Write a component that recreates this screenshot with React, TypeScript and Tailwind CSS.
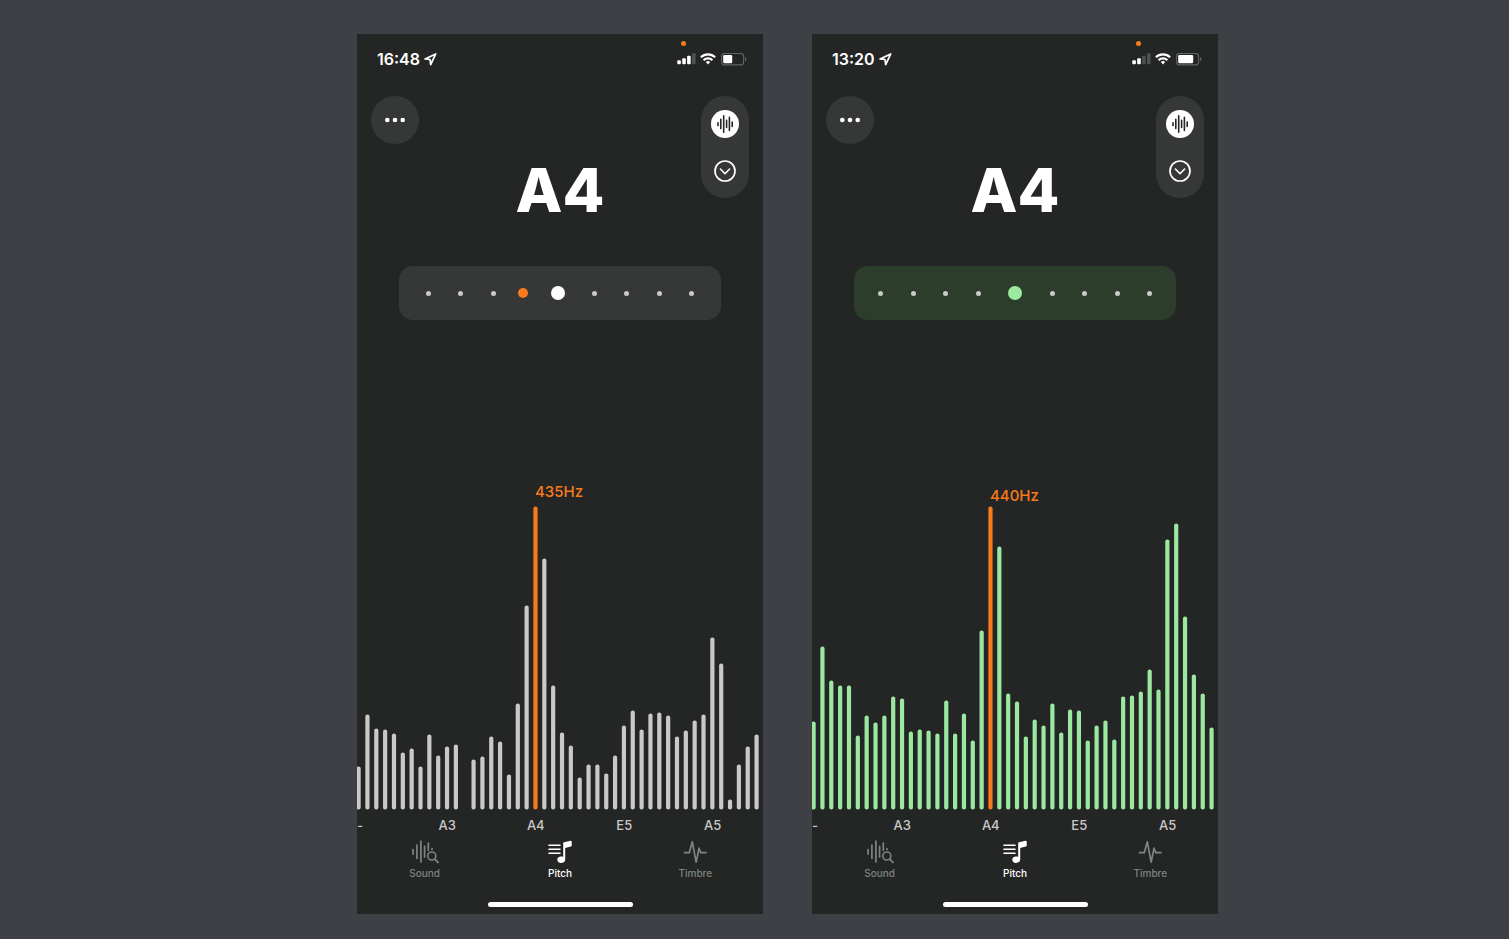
import clsx from "clsx";
import type { ReactNode } from "react";

type Screen = {
  time: string;
  signal: number;
  battery: number;
  note: string;
  frequency: string;
  inTune: boolean;
  levels: number[];
};

const PEAK_INDEX = 20;
const CHART_HEIGHT = 304;

const SCREENS: Screen[] = [
  {
    time: "16:48",
    signal: 3,
    battery: 9,
    note: "A4",
    frequency: "435Hz",
    inTune: false,
    levels: [
      43, 95, 81, 80, 76, 57, 61, 43, 75, 54, 63, 65, 0, 50, 53, 73, 68, 35, 106, 204, 303, 251, 124,
      77, 64, 32, 45, 45, 36, 54, 84, 99, 80, 96, 97, 94, 73, 79, 89, 95, 172, 146, 10, 45, 63, 75,
    ],
  },
  {
    time: "13:20",
    signal: 2,
    battery: 15,
    note: "A4",
    frequency: "440Hz",
    inTune: true,
    levels: [
      88, 163, 129, 124, 124, 74, 94, 87, 94, 113, 111, 78, 80, 79, 76, 109, 76, 96, 69, 179, 303, 263,
      116, 108, 73, 90, 84, 106, 77, 100, 99, 69, 84, 89, 70, 113, 114, 118, 140, 120, 270, 286, 193,
      135, 116, 82,
    ],
  },
];

const AXIS_LABELS = ["A3", "A4", "E5", "A5"];

function StatusBar({ time, signal, battery }: { time: string; signal: number; battery: number }) {
  return (
    <div className="flex h-[50px] items-center justify-between pr-4 pl-5 text-white">
      <div className="flex items-center gap-1">
        <span className="text-base leading-5 font-semibold">{time}</span>
        <svg viewBox="0 0 13 13" className="size-[13px]" fill="none" stroke="currentColor">
          <path d="M11.7.9 1 5.9l5 .6.7 5.1Z" strokeWidth="1.7" strokeLinejoin="round" />
        </svg>
      </div>
      <div className="relative flex items-center gap-1">
        <span className="absolute -top-3 left-1 size-[5px] rounded-full bg-[#f97a1c]" />
        <svg viewBox="0 0 19 12" className="h-3 w-[19px]">
          {[4, 6, 8.5, 11].map((height, i) => (
            <rect
              key={height}
              x={0.3 + i * 4.9}
              y={11.2 - height}
              width="3.6"
              height={height}
              rx="1"
              fill={i < signal ? "#fff" : "#4c524f"}
            />
          ))}
        </svg>
        <svg viewBox="0 0 16 12" className="h-3 w-4" fill="none" stroke="currentColor" strokeWidth="2.2">
          <path d="M.9 4.3a10.2 10.2 0 0 1 14.2 0" />
          <path d="M3.6 7.2a6.3 6.3 0 0 1 8.8 0" />
          <path d="M8 11.4 5.8 9.1a3.2 3.2 0 0 1 4.4 0Z" fill="currentColor" stroke="none" />
        </svg>
        <svg viewBox="0 0 26 13" className="ml-px h-[13px] w-[26px]">
          <rect x=".6" y=".5" width="22" height="11.4" rx="3" fill="none" stroke="#5d6661" strokeWidth="1.1" />
          <rect x="2.2" y="2.1" width={battery} height="8.2" rx="1.2" fill="#fff" />
          <path d="M24 4.3c1 .3 1.4 1 1.4 1.900s-.4 1.600-1.400 1.900Z" fill="#5d6661" />
        </svg>
      </div>
    </div>
  );
}

function WaveformIcon() {
  return (
    <svg viewBox="0 0 28 28" className="size-7" fill="none" stroke="#242625" strokeLinecap="round">
      <path
        d="M7 12.7v2.9M9.8 9.4v9.2M12.7 5.7v16.6M15.6 10.4v7M18.4 7.4v13M21.2 12v4.4"
        strokeWidth="1.6"
      />
    </svg>
  );
}

function SoundIcon() {
  return (
    <svg viewBox="0 0 30 24" className="h-6 w-[30px]" fill="none" stroke="currentColor" strokeLinecap="round">
      <path
        d="M3 9.5v4.6M6.9 5v13.3M10.9 1v21M14.6 6.3v10.6M18.3 3v7.3M22 8.6v.8"
        strokeWidth="1.7"
      />
      <circle cx="21.8" cy="16" r="4" strokeWidth="1.6" />
      <path d="m24.9 19.2 3 3.2" strokeWidth="1.9" />
    </svg>
  );
}

function PitchIcon() {
  return (
    <svg viewBox="0 0 28 24" className="h-6 w-7" fill="currentColor">
      <path
        d="M3 5.3h11M3 9.3h11M3 13.3h11"
        stroke="currentColor"
        strokeWidth="1.6"
        strokeLinecap="round"
      />
      <path d="M17.2 2.6 24.5.8q1.2-.3 1.2.9v3.7q0 .9-.9 1.1l-5.6 1.4v11.8h-2Z" />
      <ellipse cx="15.2" cy="19.7" rx="3.9" ry="3.2" transform="rotate(-12 15.2 19.7)" />
    </svg>
  );
}

function TimbreIcon() {
  return (
    <svg viewBox="0 0 28 24" className="h-6 w-7" fill="none" stroke="currentColor">
      <path
        d="M3.5 12.7h4.8l3-11 3.8 20.5 3-14 1.7 4.5H25"
        strokeWidth="1.7"
        strokeLinecap="round"
        strokeLinejoin="round"
      />
    </svg>
  );
}

function TuningMeter({ inTune }: { inTune: boolean }) {
  const dot = "size-[5px] rounded-full bg-[#c8c9c8]";

  return (
    <div
      className={clsx(
        "mx-[42px] mt-11 flex h-[54px] items-center justify-between rounded-[14px]",
        inTune ? "bg-[#2d3d2b] px-6" : "bg-[#363837] px-[27px]",
      )}
    >
      <span className={dot} />
      <span className={dot} />
      <span className={dot} />
      {inTune ? (
        <span className={dot} />
      ) : (
        <span className="-mx-[5px] size-[10px] rounded-full bg-[#f97a1c]" />
      )}
      <span className={clsx("size-[14px] rounded-full", inTune ? "bg-[#9be8a0]" : "bg-white")} />
      <span className={dot} />
      <span className={dot} />
      <span className={dot} />
      <span className={dot} />
    </div>
  );
}

function Spectrum({ levels, inTune }: { levels: number[]; inTune: boolean }) {
  return (
    <svg viewBox={`0 0 406 ${CHART_HEIGHT}`} className="block w-full">
      {levels.map((level, i) => {
        if (level === 0) return null;
        const color = inTune ? "#9be8a0" : "#c8c9c8";
        return (
          <rect
            key={i}
            x={-0.5 + i * 8.844}
            y={CHART_HEIGHT - 0.5 - level}
            width="4.2"
            height={level}
            rx="2"
            fill={i === PEAK_INDEX ? "#f97a1c" : color}
          />
        );
      })}
    </svg>
  );
}

function TabButton({ label, active, children }: { label: string; active?: boolean; children: ReactNode }) {
  return (
    <button
      type="button"
      className={clsx(
        "flex flex-col items-center gap-[3px] text-[10px] leading-3 font-medium",
        active ? "text-white" : "text-[#7c857f]",
      )}
    >
      {children}
      {label}
    </button>
  );
}

function Phone({ screen }: { screen: Screen }) {
  return (
    <section className="w-full max-w-[406px] overflow-hidden bg-[#242625] pb-[7px]">
      <StatusBar time={screen.time} signal={screen.signal} battery={screen.battery} />

      <div className="mt-3 flex items-start justify-between px-[14px]">
        <button
          type="button"
          aria-label="More"
          className="flex size-12 items-center justify-center rounded-full bg-[#363837]"
        >
          <svg viewBox="0 0 22 6" className="h-[6px] w-[22px]" fill="#fff">
            <circle cx="3.3" cy="3" r="2.3" />
            <circle cx="11" cy="3" r="2.3" />
            <circle cx="18.7" cy="3" r="2.3" />
          </svg>
        </button>
        <h1 className="mt-[62px] text-[61px] leading-[64px] font-extrabold text-white">{screen.note}</h1>
        <div className="flex w-12 flex-col items-center gap-[22px] rounded-full bg-[#363837] pt-[14px] pb-4">
          <button type="button" aria-label="Waveform" className="size-7 rounded-full bg-white">
            <WaveformIcon />
          </button>
          <button type="button" aria-label="Collapse" className="size-[22px] text-white">
            <svg viewBox="0 0 22 22" className="size-[22px]" fill="none" stroke="currentColor">
              <circle cx="11" cy="11" r="10" strokeWidth="1.7" />
              <path d="m6.4 9 4.6 4.7L15.6 9" strokeWidth="1.6" strokeLinecap="round" strokeLinejoin="round" />
            </svg>
          </button>
        </div>
      </div>

      <TuningMeter inTune={screen.inTune} />

      <div
        className={clsx(
          "flex h-[186px] items-end pl-[178px] text-[15px] leading-5 font-medium text-[#f97a1c]",
          !screen.inTune && "pb-1",
        )}
      >
        {screen.frequency}
      </div>
      <Spectrum levels={screen.levels} inTune={screen.inTune} />
      <div className="mt-[5px] grid grid-cols-[92fr_177fr_177fr_177fr_177fr_12fr] text-center text-[13px] leading-5 font-medium text-[#c8c9c8]">
        <span className="text-left">-</span>
        {AXIS_LABELS.map((label) => (
          <span key={label}>{label}</span>
        ))}
      </div>

      <nav className="mt-[5px] grid grid-cols-3">
        <TabButton label="Sound">
          <SoundIcon />
        </TabButton>
        <TabButton label="Pitch" active>
          <PitchIcon />
        </TabButton>
        <TabButton label="Timbre">
          <TimbreIcon />
        </TabButton>
      </nav>
      <div className="mx-auto mt-[23px] h-[5px] w-[145px] rounded-full bg-white" />
    </section>
  );
}

export default function App() {
  return (
    <main className="flex min-h-screen items-start justify-center gap-[49px] bg-[#3f4045] pt-[34px] pb-6 pl-[66px] font-['Inter',sans-serif]">
      {SCREENS.map((screen) => (
        <Phone key={screen.time} screen={screen} />
      ))}
    </main>
  );
}
